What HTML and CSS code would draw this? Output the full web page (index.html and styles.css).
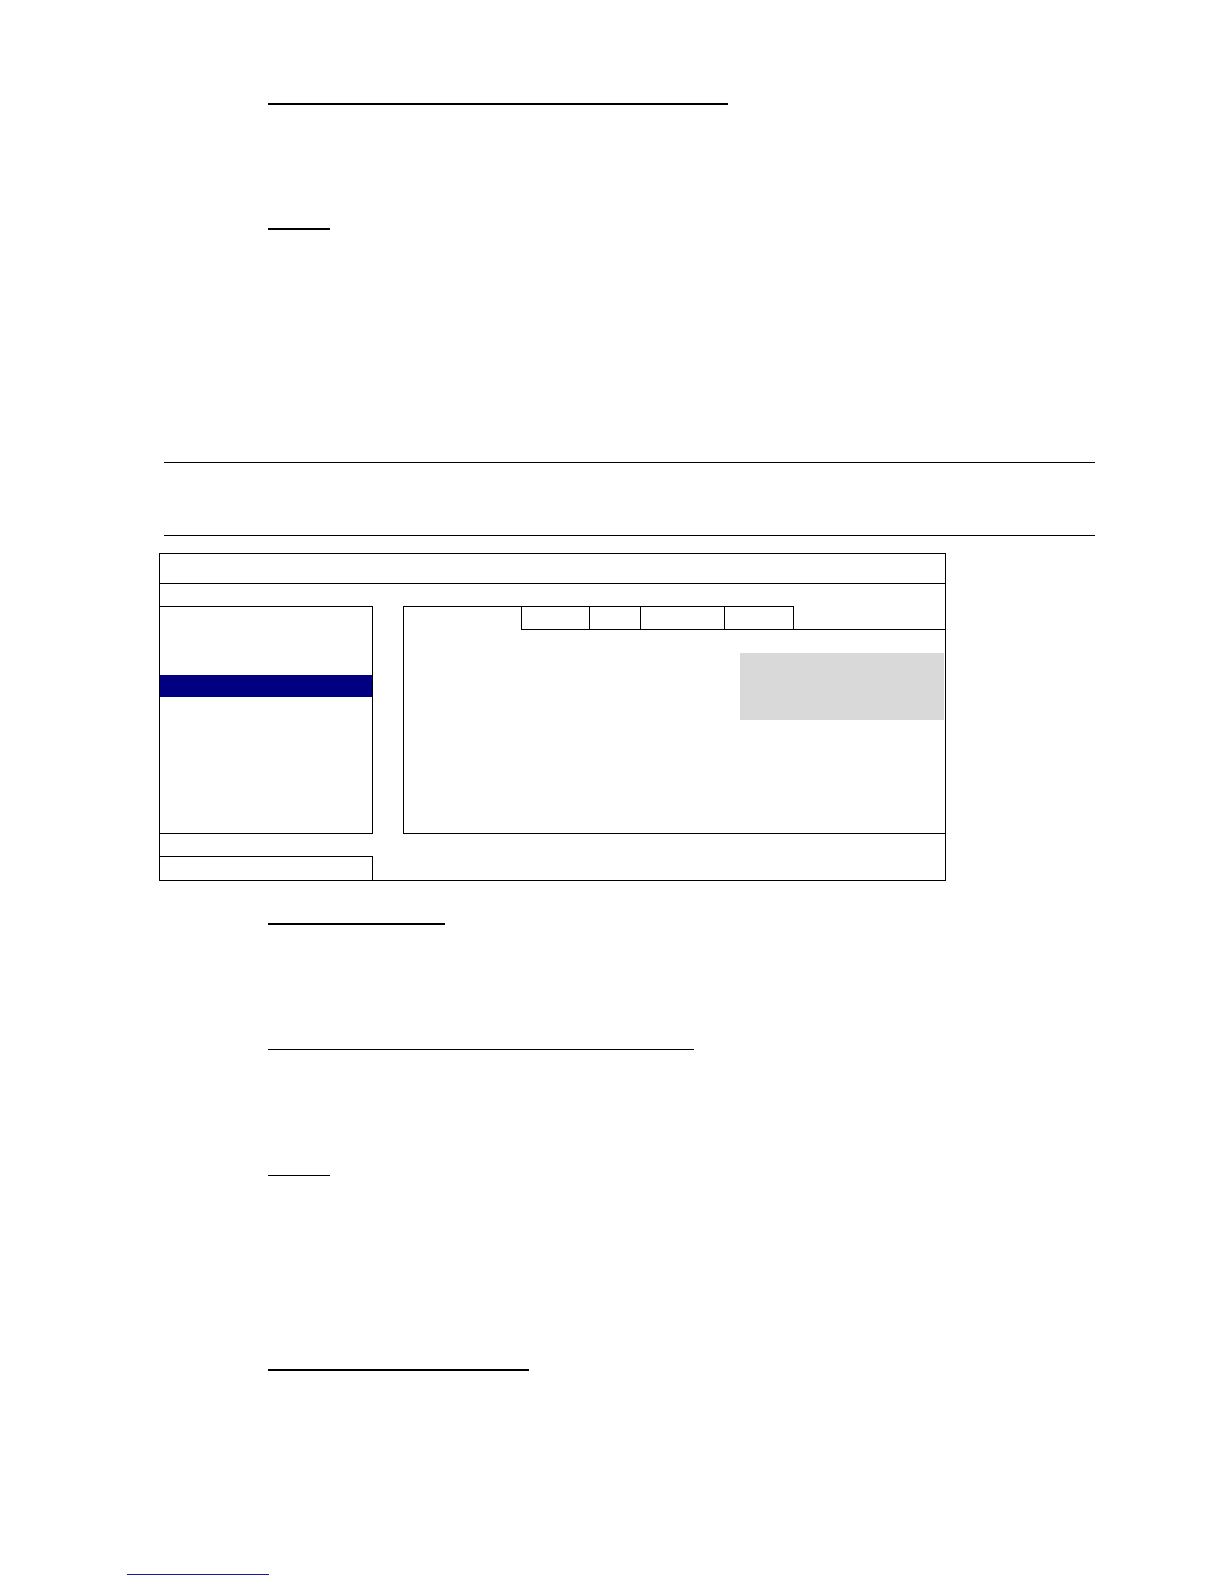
FILE: index.html
```html
<!DOCTYPE html>
<html lang="en">
<head>
<meta charset="utf-8">
<title>Manual page</title>
<link rel="stylesheet" href="styles.css">
</head>
<body>
<div class="page">
  <div class="rule rule-a"></div>
  <div class="rule rule-b"></div>

  <div class="hr hr-1"></div>
  <div class="hr hr-2"></div>

  <div class="osd">
    <div class="osd-title"></div>
    <div class="osd-subtitle"></div>
    <div class="osd-main">
      <ul class="menu">
        <li></li>
        <li></li>
        <li></li>
        <li class="active"></li>
        <li></li>
        <li></li>
        <li></li>
        <li></li>
        <li></li>
        <li></li>
      </ul>
      <div class="panel">
        <div class="tabbar">
          <div class="tab-lead"></div>
          <div class="tab tab-1"></div>
          <div class="tab tab-2"></div>
          <div class="tab tab-3"></div>
          <div class="tab tab-4"></div>
          <div class="tab-rest"></div>
        </div>
        <div class="panel-body">
          <div class="note"></div>
        </div>
      </div>
    </div>
    <div class="osd-foot">
      <div class="foot-box"></div>
    </div>
  </div>

  <div class="rule rule-c"></div>
  <div class="rule rule-d"></div>
  <div class="rule rule-e"></div>
  <div class="rule rule-f"></div>

  <div class="link-line"></div>
</div>
</body>
</html>
```

FILE: styles.css
```css
* {
  box-sizing: border-box;
}

html, body {
  margin: 0;
  padding: 0;
  background: #ffffff;
}

body {
  font-family: "Liberation Serif", "Times New Roman", serif;
  color: #000000;
  width: 1224px;
  min-height: 1584px;
}

.page {
  padding-top: 103px;
  display: flow-root;
}

/* underlined headings (text hidden in source) */
.rule {
  margin-left: 268px;
  background: #000000;
}

.rule-a {
  width: 460px;
  height: 2px;
}

.rule-b {
  margin-top: 123px;
  width: 62px;
  height: 2px;
}

.rule-c {
  margin-top: 42px;
  width: 177px;
  height: 2px;
}

.rule-d {
  margin-top: 124px;
  width: 426px;
  height: 1px;
}

.rule-e {
  margin-top: 125px;
  width: 62px;
  height: 1px;
}

.rule-f {
  margin-top: 193px;
  width: 261px;
  height: 2px;
}

/* horizontal rules framing the note area */
.hr {
  margin-left: 164px;
  width: 931px;
  height: 1px;
  background: #000000;
}

.hr-1 {
  margin-top: 232px;
}

.hr-2 {
  margin-top: 72px;
}

/* on-screen menu diagram */
.osd {
  margin-top: 17px;
  margin-left: 159px;
  width: 787px;
  border: 1px solid #000000;
}

.osd-title {
  height: 30px;
  border-bottom: 1px solid #000000;
}

.osd-subtitle {
  height: 22px;
}

.osd-main {
  display: flex;
  gap: 30px;
  height: 228px;
}

.menu {
  list-style: none;
  margin: 0;
  padding: 0;
  width: 213px;
  height: 228px;
  border-top: 1px solid #000000;
  border-right: 1px solid #000000;
  border-bottom: 1px solid #000000;
}

.menu li {
  height: 22.6px;
}

.menu li.active {
  background: #000080;
}

.panel {
  width: 542px;
  height: 228px;
  display: flex;
  flex-direction: column;
  border-left: 1px solid #000000;
  border-bottom: 1px solid #000000;
}

.tabbar {
  display: flex;
  height: 24px;
  flex: none;
}

.tab-lead {
  width: 117px;
  border-top: 1px solid #000000;
}

.tab {
  border-top: 1px solid #000000;
  border-bottom: 1px solid #000000;
  border-left: 1px solid #000000;
}

.tab-1 { width: 68px; }
.tab-2 { width: 51px; }
.tab-3 { width: 84px; }
.tab-4 {
  width: 70px;
  border-right: 1px solid #000000;
}

.tab-rest {
  width: 151px;
  border-bottom: 1px solid #000000;
}

.panel-body {
  flex: 1;
  display: flex;
  justify-content: flex-end;
  align-items: flex-start;
  padding-top: 23px;
  padding-right: 1px;
}

.note {
  width: 204px;
  height: 67px;
  background: #d9d9d9;
}

.osd-foot {
  padding-top: 22px;
}

.foot-box {
  width: 213px;
  height: 24px;
  border-top: 1px solid #000000;
  border-right: 1px solid #000000;
}

/* footer hyperlink underline */
.link-line {
  margin-top: 203px;
  margin-left: 127px;
  width: 142px;
  height: 1px;
  background: #1a1a99;
}
```
